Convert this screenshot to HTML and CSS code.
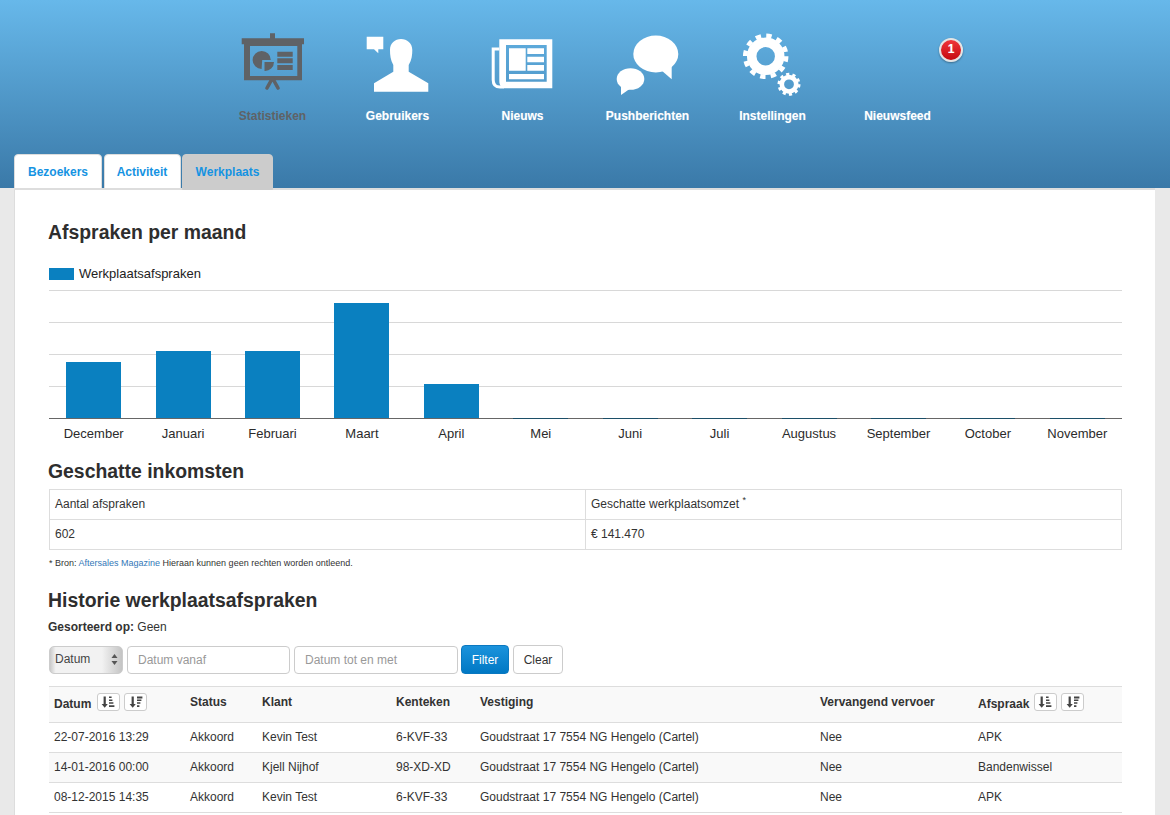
FILE: index.html
```html
<!DOCTYPE html>
<html lang="nl">
<head>
<meta charset="utf-8">
<title>Statistieken</title>
<link rel="stylesheet" href="styles.css">
</head>
<body>
<svg class="defs" width="0" height="0" aria-hidden="true">
  <symbol id="sort-asc" viewBox="0 0 14 12">
    <path d="M2.600 0.500h2.200v7.500h2L3.700 11.800 0.600 8h2z"/>
    <path d="M8 0.500h2.600v1.500H8zM8 3.400h3.400v1.500H8zM8 6.300h4.400v1.500H8zM8 9.200h5.400v1.900H8z"/>
  </symbol>
  <symbol id="sort-desc" viewBox="0 0 14 12">
    <path d="M2.600 0.500h2.200v7.500h2L3.700 11.800 0.600 8h2z"/>
    <path d="M8 0.500h5.400v1.900H8zM8 3.400h4.400v1.500H8zM8 6.300h3.400v1.500H8zM8 9.200h2.400v1.900H8z"/>
  </symbol>
</svg>

<header class="top">
  <nav class="nav">
    <a class="nav-item is-current">
      <svg class="nav-icon" viewBox="1 0 80 70">
        <path fill="#5f6266" d="M38 3.3h5v5h-5zM9.7 8.3H72v6h-2v36H12v-36H9.7zM18 16v30h47.3V16z" fill-rule="evenodd"/>
        <path fill="#5f6266" d="M29.6 21a9 9 0 1 0 0 18l0.6-9h8.6a9 9 0 0 0-9.2-9z"/>
        <path fill="#5f6266" d="M32.5 32h9.5a9 9 0 0 1-9.5 9zM45.3 21.7h15.4v5H45.3zM45.3 28.3h15.4v5H45.3zM45.3 35h15.4v5H45.3z"/>
        <path stroke="#5f6266" stroke-width="3.6" stroke-linecap="round" fill="none" d="M40 49l-5 9M41 49l5 9"/>
      </svg>
      <span>Statistieken</span>
    </a>
    <a class="nav-item">
      <svg class="nav-icon" viewBox="1 0 80 70">
        <path fill="#fff" d="M9.7 6.7h16.6v12.6h-5v4l-4.300-4H9.700z"/>
        <path fill="#fff" d="M17 61.700V53.300L36.300 41.700V35C33.500 30 33 25 33 20C33 13 38 9 44 9C50 9 55.300 13 55.300 20C55.300 25 54.800 30 51.700 35V41.700L71.300 53.300V61.700z"/>
      </svg>
      <span>Gebruikers</span>
    </a>
    <a class="nav-item">
      <svg class="nav-icon" viewBox="1 0 80 70">
        <path fill="#fff" fill-rule="evenodd" d="M17.300 9.300H70.300V58.300H24C19 58.300 17.300 55 17.300 51zM24 15V51.700H64.700V15z"/>
        <path fill="none" stroke="#fff" stroke-width="3" d="M17.300 19H11.200V50C11.200 55 13.500 57 18 57H22"/>
        <path fill="#fff" d="M27 18.300H43.700V40.700H27zM45.300 18.300H62V24H45.300zM45.300 26.700H62V32.300H45.300zM45.300 35H62V40.700H45.300zM27 44H62V49.300H27z"/>
      </svg>
      <span>Nieuws</span>
    </a>
    <a class="nav-item">
      <svg class="nav-icon" viewBox="1 0 80 70">
        <ellipse fill="#fff" cx="48.800" cy="24" rx="22.500" ry="18.500"/>
        <path fill="#fff" d="M54 40L64.700 49.300V34z"/>
        <ellipse fill="#fff" cx="23.500" cy="49" rx="13.800" ry="10.800"/>
        <path fill="#fff" d="M14 54V65L24 58z"/>
      </svg>
      <span>Pushberichten</span>
    </a>
    <a class="nav-item">
      <svg class="nav-icon" viewBox="1 0 80 70">
        <g fill="none" stroke="#fff">
          <circle cx="33.700" cy="26.300" r="14" stroke-width="9.500"/>
          <circle cx="33.700" cy="26.300" r="20.500" stroke-width="4.500" stroke-dasharray="5.400 5.330"/>
          <circle cx="57" cy="54.300" r="7.200" stroke-width="4.600"/>
          <circle cx="57" cy="54.300" r="10" stroke-width="3" stroke-dasharray="3.140 3.140"/>
        </g>
      </svg>
      <span>Instellingen</span>
    </a>
    <a class="nav-item">
      <div class="nav-icon"></div>
      <span>Nieuwsfeed</span>
      <b class="badge">1</b>
    </a>
  </nav>
  <div class="tabs">
    <a class="tab tab-1">Bezoekers</a>
    <a class="tab tab-2">Activiteit</a>
    <a class="tab tab-active">Werkplaats</a>
  </div>
</header>

<main class="panel">
  <h2 class="title title-first">Afspraken per maand</h2>
  <div class="legend"><i class="swatch"></i><span>Werkplaatsafspraken</span></div>

  <div class="chart">
    <div class="col"><i class="bar" style="height:56px"></i></div>
    <div class="col"><i class="bar" style="height:67px"></i></div>
    <div class="col"><i class="bar" style="height:67px"></i></div>
    <div class="col"><i class="bar" style="height:115px"></i></div>
    <div class="col"><i class="bar" style="height:34px"></i></div>
    <div class="col"><i class="bar bar-zero"></i></div>
    <div class="col"><i class="bar bar-zero"></i></div>
    <div class="col"><i class="bar bar-zero"></i></div>
    <div class="col"><i class="bar bar-zero"></i></div>
    <div class="col"><i class="bar bar-zero"></i></div>
    <div class="col"><i class="bar bar-zero"></i></div>
    <div class="col"><i class="bar bar-zero"></i></div>
  </div>
  <div class="months">
    <span>December</span><span>Januari</span><span>Februari</span><span>Maart</span><span>April</span><span>Mei</span><span>Juni</span><span>Juli</span><span>Augustus</span><span>September</span><span>October</span><span>November</span>
  </div>

  <h2 class="title title-income">Geschatte inkomsten</h2>
  <table class="income">
    <tr><td class="income-left">Aantal afspraken</td><td>Geschatte werkplaatsomzet <sup>*</sup></td></tr>
    <tr><td>602</td><td>€ 141.470</td></tr>
  </table>
  <p class="source">* Bron: <a>Aftersales Magazine</a> Hieraan kunnen geen rechten worden ontleend.</p>

  <h2 class="title title-history">Historie werkplaatsafspraken</h2>
  <p class="sorted"><b>Gesorteerd op:</b> Geen</p>

  <form class="filters">
    <div class="select">
      <span>Datum</span>
      <svg width="7" height="11" viewBox="0 0 7 11"><path fill="#555" d="M3.500 0L6.500 4H0.500zM3.500 11L0.500 7H6.500z"/></svg>
    </div>
    <input class="input input-from" type="text" placeholder="Datum vanaf">
    <input class="input input-to" type="text" placeholder="Datum tot en met">
    <button class="btn btn-primary" type="button">Filter</button>
    <button class="btn btn-clear" type="button">Clear</button>
  </form>

  <table class="list">
    <colgroup>
      <col class="c1"><col class="c2"><col class="c3"><col class="c4"><col class="c5"><col class="c6"><col class="c7">
    </colgroup>
    <thead>
      <tr>
        <th class="sortable first">Datum
          <span class="sort"><svg><use href="#sort-asc"/></svg></span>
          <span class="sort"><svg><use href="#sort-desc"/></svg></span>
        </th>
        <th>Status</th><th>Klant</th><th>Kenteken</th><th>Vestiging</th><th>Vervangend vervoer</th>
        <th class="sortable">Afspraak
          <span class="sort"><svg><use href="#sort-asc"/></svg></span>
          <span class="sort"><svg><use href="#sort-desc"/></svg></span>
        </th>
      </tr>
    </thead>
    <tbody>
      <tr><td class="first">22-07-2016 13:29</td><td>Akkoord</td><td>Kevin Test</td><td>6-KVF-33</td><td>Goudstraat 17 7554 NG Hengelo (Cartel)</td><td>Nee</td><td>APK</td></tr>
      <tr><td class="first">14-01-2016 00:00</td><td>Akkoord</td><td>Kjell Nijhof</td><td>98-XD-XD</td><td>Goudstraat 17 7554 NG Hengelo (Cartel)</td><td>Nee</td><td>Bandenwissel</td></tr>
      <tr><td class="first">08-12-2015 14:35</td><td>Akkoord</td><td>Kevin Test</td><td>6-KVF-33</td><td>Goudstraat 17 7554 NG Hengelo (Cartel)</td><td>Nee</td><td>APK</td></tr>
    </tbody>
  </table>
</main>
</body>
</html>
```
FILE: styles.css
```css
* { box-sizing: border-box; }
html, body { height: 815px; overflow: hidden; }
body {
  margin: 0;
  background: #e9e9e9;
  color: #333;
  font: 12px/18px "Liberation Sans", Arial, sans-serif;
}
.defs { position: absolute; }

.top {
  height: 188px;
  background: linear-gradient(#67b8ea, #3a79a8);
  display: flex;
  flex-direction: column;
}
.nav {
  flex: none;
  display: flex;
  justify-content: center;
  padding-top: 30px;
  height: 154px;
}
.nav-item {
  position: relative;
  width: 125px;
  display: flex;
  flex-direction: column;
  align-items: center;
  color: #fff;
  font-weight: bold;
  line-height: 14px;
  text-shadow: 0 0 1px rgba(255,255,255,.35);
}
.nav-item.is-current { color: #5f6266; text-shadow: none; }
.nav-icon { width: 80px; height: 70px; display: block; margin-bottom: 9px; }
.badge {
  position: absolute;
  left: 104px;
  top: 8px;
  width: 24px;
  height: 24px;
  border-radius: 50%;
  border: 2px solid #e4e4e4;
  background: linear-gradient(#f0353a, #c40a10);
  box-shadow: 0 1px 2px rgba(0,0,0,.35);
  text-align: center;
  line-height: 19px;
  font-size: 12px;
  color: #fff;
}

.tabs {
  flex: none;
  display: flex;
  align-items: flex-start;
  gap: 2px;
  padding-left: 14px;
  position: relative;
  z-index: 2;
}
.tab {
  height: 35px;
  line-height: 34px;
  text-align: center;
  font-weight: bold;
  color: #1593e2;
  background: #fff;
  border: 1px solid #ddd;
  border-radius: 4px 4px 0 0;
}
.tab-1 { width: 88px; }
.tab-2 { width: 77px; padding-right: 1px; }
.tab-active {
  width: 91px;
  height: 36px;
  background: #ccc;
  border-color: #ccc;
  margin-left: -1px;
}

.panel {
  margin: 0 15px 0 14px;
  height: 627px;
  background: #fff;
  border: 1px solid #ddd;
  border-width: 2px 0 0 1px;
  padding: 0 33px 0 34px;
}
.title {
  margin: 0 0 0 -1px;
  font-size: 19.4px;
  line-height: 26px;
  font-weight: bold;
  color: #2e2e2e;
}
.title-first { padding-top: 29px; height: 55px; }
.legend {
  display: flex;
  align-items: center;
  gap: 5px;
  margin-top: 20px;
  height: 18px;
  font-size: 13px;
  color: #222;
}
.swatch { width: 25px; height: 12px; background: #0a80c0; }

.chart {
  margin-top: 7px;
  height: 129px;
  display: grid;
  grid-template-columns: repeat(12, 1fr);
  align-items: end;
  background:
    repeating-linear-gradient(#d8d8d8 0 1px, transparent 1px 32px);
  border-bottom: 1px solid #666;
}
.col { display: flex; justify-content: center; }
.bar { display: block; width: 55px; background: #0a80c0; }
.bar-zero { height: 1px; background: #1c4f68; margin-bottom: -1px; }
.months {
  display: grid;
  grid-template-columns: repeat(12, 1fr);
  text-align: center;
  font-size: 13px;
  line-height: 16px;
  color: #2b2b2b;
  padding-top: 7px;
}

.title-income { margin-top: 16px; }
.income {
  width: 100%;
  margin-top: 5px;
  border-collapse: collapse;
  table-layout: fixed;
}
.income td {
  border: 1px solid #ddd;
  height: 30px;
  padding: 0 5px 2px;
  color: #333;
}
.income-left { width: 536px; }
.income sup { font-size: 9px; line-height: 0; }
.source { margin: 4px 0 0; font-size: 9px; line-height: 18px; color: #333; }
.source a { color: #3378b8; }

.title-history { margin-top: 15px; }
.sorted { margin: 5px 0 0 -1px; line-height: 18px; }

.filters {
  display: flex;
  align-items: center;
  gap: 4px;
  margin-top: 9px;
  height: 29px;
}
.select {
  width: 74px;
  height: 28px;
  display: flex;
  justify-content: space-between;
  align-items: center;
  padding: 0 4px 0 5px;
  border: 1px solid #ccc;
  border-radius: 5px;
  color: #444;
  background: linear-gradient(90deg, #c9c9c9 0, #f2f2f2 8%, #f2f2f2 72%, #c4c4c4 100%);
}
.select span { margin-top: -2px; }
.input {
  height: 28px;
  padding: 0 10px;
  border: 1px solid #ccc;
  border-radius: 4px;
  background: #fff;
  font: 12px "Liberation Sans", Arial, sans-serif;
}
.input::placeholder { color: #999; opacity: 1; }
.input-from { width: 163px; }
.input-to { width: 164px; }
.btn {
  height: 29px;
  padding: 0;
  border: 1px solid #ccc;
  border-radius: 4px;
  background: #fff;
  color: #333;
  font: 12px "Liberation Sans", Arial, sans-serif;
}
.btn-clear { width: 50px; }
.btn-primary {
  width: 48px;
  margin-left: -1px;
  background: linear-gradient(#1b93dc, #0078c4);
  border-color: #0a78c0;
  color: #fff;
}

.list {
  width: 1073px;
  margin-top: 12px;
  border-collapse: collapse;
  table-layout: fixed;
}
.c1 { width: 135px; }
.c2 { width: 72px; }
.c3 { width: 134px; }
.c4 { width: 84px; }
.c5 { width: 340px; }
.c6 { width: 158px; }
.c7 { width: 150px; }
.list th {
  height: 36px;
  padding: 0 6px 5px;
  text-align: left;
  font-weight: bold;
  background: #f9f9f9;
  border-top: 1px solid #ddd;
  border-bottom: 1px solid #ddd;
  white-space: nowrap;
}
.list th.sortable { padding-bottom: 3px; }
.list td {
  height: 30px;
  padding: 0 6px 2px;
  border-bottom: 1px solid #ddd;
}
.list th.first, .list td.first { padding-left: 5px; }
.list th.first .sort:first-of-type { margin-left: 2px; }
.list tbody tr:nth-child(even) td { background: #f9f9f9; }
.sort {
  display: inline-flex;
  align-items: center;
  justify-content: center;
  width: 23px;
  height: 18px;
  margin-left: 1px;
  border: 1px solid #ccc;
  border-radius: 3px;
  background: #fff;
}
.sort svg { width: 14px; height: 12px; fill: #444; }
```
